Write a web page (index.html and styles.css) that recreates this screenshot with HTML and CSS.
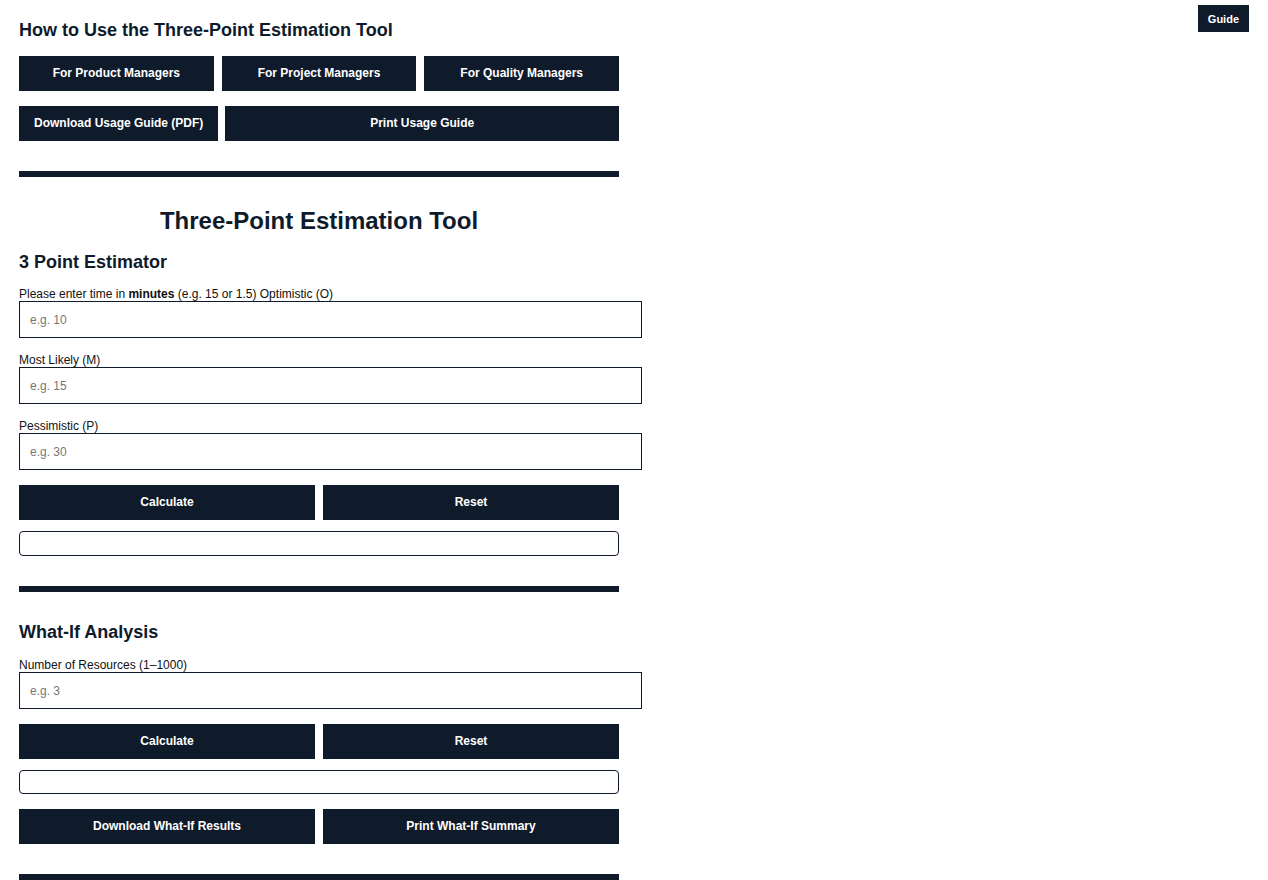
FILE: index.html
```html
<!DOCTYPE html>
<html lang="en">
<head>
<meta charset="utf-8">
<title>Three-Point Estimation Tool</title>
<link rel="stylesheet" href="styles.css">
</head>
<body>
<button class="guide-btn">Guide</button>
<main class="page">
  <section class="usage">
    <h2 class="usage-title">How to Use the Three-Point Estimation Tool</h2>
    <div class="btn-row">
      <button class="btn grow">For Product Managers</button>
      <button class="btn grow">For Project Managers</button>
      <button class="btn grow">For Quality Managers</button>
    </div>
    <div class="btn-row second">
      <button class="btn pad">Download Usage Guide (PDF)</button>
      <button class="btn grow">Print Usage Guide</button>
    </div>
  </section>
  <div class="bar"></div>

  <h1 class="tool-title">Three-Point Estimation Tool</h1>
  <h3 class="section-title">3 Point Estimator</h3>

  <label class="field-label" for="opt">Please enter time in <b>minutes</b> (e.g. 15 or 1.5) Optimistic (O)</label>
  <input class="field" id="opt" type="text" placeholder="e.g. 10">
  <label class="field-label next" for="ml">Most Likely (M)</label>
  <input class="field" id="ml" type="text" placeholder="e.g. 15">
  <label class="field-label next" for="pes">Pessimistic (P)</label>
  <input class="field" id="pes" type="text" placeholder="e.g. 30">

  <div class="btn-row action">
    <button class="btn grow">Calculate</button>
    <button class="btn grow">Reset</button>
  </div>
  <div class="result first"></div>
  <div class="bar mid"></div>

  <h3 class="section-title whatif">What-If Analysis</h3>
  <label class="field-label next" for="res">Number of Resources (1–1000)</label>
  <input class="field" id="res" type="text" placeholder="e.g. 3">
  <div class="btn-row action">
    <button class="btn grow">Calculate</button>
    <button class="btn grow">Reset</button>
  </div>
  <div class="result"></div>
  <div class="btn-row action">
    <button class="btn grow">Download What-If Results</button>
    <button class="btn grow">Print What-If Summary</button>
  </div>
  <div class="bar mid"></div>
</main>
</body>
</html>
```

FILE: styles.css
```css
* { box-sizing: border-box; }

html, body {
  margin: 0;
  padding: 0;
  background: #ffffff;
  font-family: "Liberation Sans", Arial, Helvetica, sans-serif;
  color: #111111;
}

.page {
  width: 638px;
  padding: 0 19px;
}

.guide-btn {
  position: fixed;
  top: 5px;
  right: 19px;
  height: 27px;
  padding: 0 10px;
  border: none;
  background: #0f1b2b;
  color: #ffffff;
  font-family: "Liberation Sans", Arial, sans-serif;
  font-size: 11px;
  font-weight: bold;
}

.usage-title {
  margin: 20px 0 15px;
  font-size: 18px;
  line-height: 21px;
  font-weight: bold;
  color: #0f1b2b;
}

.btn-row {
  display: flex;
  gap: 8px;
  width: 600px;
}

.btn-row.second { margin-top: 15px; gap: 7px; }
.btn-row.action { margin-top: 15px; }

.btn {
  height: 35px;
  border: none;
  background: #0f1b2b;
  color: #ffffff;
  font-family: "Liberation Sans", Arial, sans-serif;
  font-size: 12px;
  font-weight: bold;
  padding: 0 0 2px;
}

.btn.grow { flex: 1 1 0; }
.btn.pad { flex: none; padding: 0 15px 2px; }

.bar {
  width: 600px;
  height: 6px;
  background: #0f1b2b;
  margin-top: 30px;
}

.tool-title {
  width: 600px;
  margin: 30px 0 0;
  text-align: center;
  font-size: 24px;
  line-height: 28px;
  font-weight: bold;
  color: #0f1b2b;
}

.section-title {
  margin: 17px 0 0;
  font-size: 18px;
  line-height: 21px;
  font-weight: bold;
  color: #0f1b2b;
}

.section-title.whatif { margin-top: 30px; }

.field-label {
  display: block;
  margin-top: 14px;
  margin-bottom: 0;
  font-size: 12px;
  line-height: 14px;
  color: #111111;
}

.field-label.next { margin-top: 15px; }

.field {
  display: block;
  width: 623px;
  height: 37px;
  padding: 0 10px;
  border: 1px solid #0f1b2b;
  border-radius: 0;
  background: #ffffff;
  font-family: "Liberation Sans", Arial, sans-serif;
  font-size: 12px;
  color: #111111;
  outline: none;
}

.field::placeholder { color: #777777; }

.result {
  width: 600px;
  height: 24px;
  margin-top: 11px;
  border: 1px solid #0f1b2b;
  border-radius: 4px;
}

.result.first { height: 25px; }
```
